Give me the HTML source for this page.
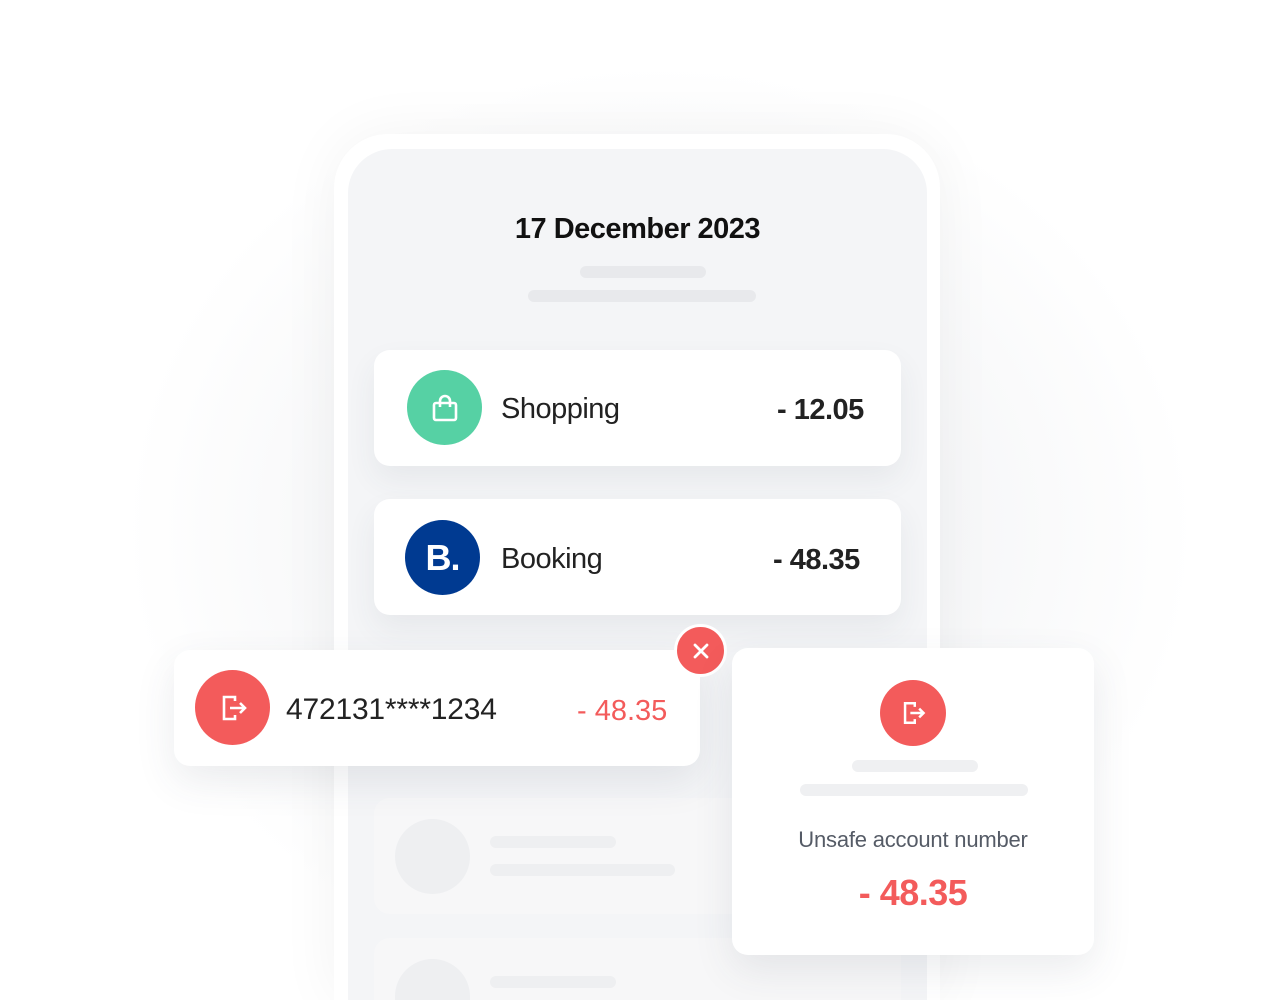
<!DOCTYPE html>
<html><head><meta charset="utf-8"><style>
*{margin:0;padding:0;box-sizing:border-box}
html,body{width:1272px;height:1000px;overflow:hidden}
body{background:#fff;position:relative;font-family:"Liberation Sans",sans-serif}
.abs{position:absolute}
.glow{left:120px;top:60px;width:1080px;height:940px;border-radius:300px 300px 0 0;background:radial-gradient(ellipse at center,rgba(200,204,212,.35),rgba(255,255,255,0) 70%)}
.phone{left:334px;top:134px;width:606px;height:866px;background:#fff;border-radius:54px 54px 0 0;box-shadow:0 0 60px rgba(0,0,0,.05)}
.inner{left:348px;top:149px;width:579px;height:851px;background:#f4f5f7;border-radius:44px 44px 0 0}
.card{background:#fff;border-radius:16px;box-shadow:0 14px 30px rgba(60,70,90,.07)}
.bar{background:#e8e9ec;border-radius:6px}
.circ{border-radius:50%;display:flex;align-items:center;justify-content:center}
.t{font-size:29px;color:#222;letter-spacing:-0.5px}
.amt{font-size:29px;font-weight:bold;color:#222;letter-spacing:-0.5px}
</style></head><body>
<div class="abs glow"></div>
<div class="abs phone"></div>
<div class="abs inner"></div>
<div class="abs" style="left:348px;top:213px;width:579px;text-align:center;font-size:29px;font-weight:bold;color:#111;letter-spacing:-0.5px">17 December 2023</div>
<div class="abs bar" style="left:580px;top:266px;width:126px;height:12px"></div>
<div class="abs bar" style="left:528px;top:290px;width:228px;height:12px"></div>

<div class="abs card" style="left:374px;top:350px;width:527px;height:116px"></div>
<div class="abs circ" style="left:407px;top:370px;width:75px;height:75px;background:#56d1a4">
<svg width="32" height="32" viewBox="0 0 32 32" fill="none" stroke="#fff" stroke-width="2.6"><rect x="5" y="11" width="22" height="17" rx="2"/><path d="M11 15V9a5 5 0 0 1 10 0v6"/></svg></div>
<div class="abs t" style="left:501px;top:393px">Shopping</div>
<div class="abs amt" style="left:777px;top:394px">- 12.05</div>

<div class="abs card" style="left:374px;top:499px;width:527px;height:116px"></div>
<div class="abs circ" style="left:405px;top:520px;width:75px;height:75px;background:#003a91;color:#fff;font-weight:bold;font-size:36px;letter-spacing:-1px">B.</div>
<div class="abs t" style="left:501px;top:543px">Booking</div>
<div class="abs amt" style="left:773px;top:544px">- 48.35</div>

<div class="abs" style="left:374px;top:798px;width:527px;height:116px;background:#f7f7f8;border-radius:16px"></div>
<div class="abs circ" style="left:395px;top:819px;width:75px;height:75px;background:#eeeff1"></div>
<div class="abs bar" style="left:490px;top:836px;width:126px;height:12px;background:#eeeff1"></div>
<div class="abs bar" style="left:490px;top:864px;width:185px;height:12px;background:#eeeff1"></div>
<div class="abs" style="left:374px;top:938px;width:527px;height:62px;background:#f7f7f8;border-radius:16px 16px 0 0"></div>
<div class="abs" style="left:395px;top:959px;width:75px;height:41px;background:#eeeff1;border-radius:38px 38px 0 0"></div>
<div class="abs bar" style="left:490px;top:976px;width:126px;height:12px;background:#eeeff1"></div>

<div class="abs card" style="left:174px;top:650px;width:526px;height:116px;box-shadow:0 15px 40px rgba(60,70,90,.1)"></div>
<div class="abs circ" style="left:195px;top:670px;width:75px;height:75px;background:#f35b5b">
<svg width="34" height="34" viewBox="0 0 34 34" fill="none" stroke="#fff" stroke-width="2.6"><path d="M19 10V6H8v22h11v-4"/><path d="M14 17h14M24 12l5 5-5 5"/></svg></div>
<div class="abs" style="left:286px;top:693px;font-size:30px;color:#222;letter-spacing:-0.2px">472131****1234</div>
<div class="abs" style="left:577px;top:695px;font-size:29px;color:#f35b5b">- 48.35</div>
<div class="abs circ" style="left:674px;top:624px;width:53px;height:53px;background:#f35b5b;border:3px solid #fff">
<svg width="18" height="18" viewBox="0 0 18 18" stroke="#fff" stroke-width="2.8" stroke-linecap="round"><path d="M3 3l12 12M15 3L3 15"/></svg></div>

<div class="abs card" style="left:732px;top:648px;width:362px;height:307px;box-shadow:0 15px 40px rgba(60,70,90,.1)"></div>
<div class="abs circ" style="left:880px;top:680px;width:66px;height:66px;background:#f35b5b">
<svg width="30" height="30" viewBox="0 0 34 34" fill="none" stroke="#fff" stroke-width="2.8"><path d="M19 10V6H8v22h11v-4"/><path d="M14 17h14M24 12l5 5-5 5"/></svg></div>
<div class="abs bar" style="left:852px;top:760px;width:126px;height:12px;background:#eff0f2"></div>
<div class="abs bar" style="left:800px;top:784px;width:228px;height:12px;background:#eff0f2"></div>
<div class="abs" style="left:732px;top:827px;width:362px;text-align:center;font-size:22px;color:#555b66;letter-spacing:-0.2px">Unsafe account number</div>
<div class="abs" style="left:732px;top:872px;width:362px;text-align:center;font-size:36px;font-weight:bold;color:#f35b5b;letter-spacing:-0.5px">- 48.35</div>
</body></html>
